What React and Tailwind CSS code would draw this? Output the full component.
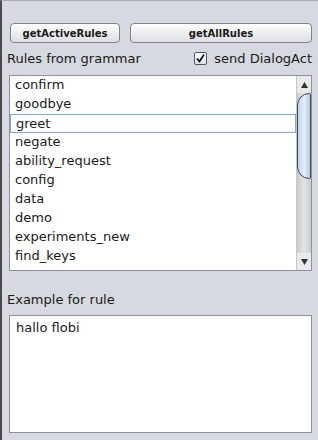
const rules = [
  "confirm",
  "goodbye",
  "greet",
  "negate",
  "ability_request",
  "config",
  "data",
  "demo",
  "experiments_new",
  "find_keys",
];

function Arrow({ up }) {
  return (
    <svg width="7" height="6" viewBox="0 0 7 6">
      <path d={up ? "M3.5 0 L7 6 L0 6 Z" : "M0 0 L7 0 L3.5 6 Z"} fill="#333" />
    </svg>
  );
}

export default function App() {
  return (
    <div
      className="w-[318px] h-[440px] bg-[#d6d9df] border-l-2 border-l-[#4a4a4a] border-t border-t-[#a9acb2] text-[13px] text-[#1a1a1a]"
      style={{ fontFamily: "'DejaVu Sans', sans-serif" }}
    >
      <div className="flex gap-[10px] pl-[8px] pr-[6px] pt-[22px]">
        <button className="w-[110px] h-[20px] rounded-[4px] border border-[#7f8288] bg-gradient-to-b from-white to-[#dcdee2] text-[10px] font-bold">
          getActiveRules
        </button>
        <button className="flex-1 h-[20px] rounded-[4px] border border-[#7f8288] bg-gradient-to-b from-white to-[#dcdee2] text-[10px] font-bold">
          getAllRules
        </button>
      </div>

      <div className="flex items-center justify-between pl-[5px] pr-[6px] mt-[7px] h-[17px]">
        <span>Rules from grammar</span>
        <label className="flex items-center gap-[7px]">
          <span className="w-[13px] h-[13px] border border-[#4e5a6e] rounded-[2px] bg-gradient-to-b from-white to-[#dfe3ea] flex items-center justify-center">
            <svg width="11" height="11" viewBox="0 0 11 11">
              <path d="M2 5.5 L4.5 8.5 L9 1.5" stroke="#111" strokeWidth="1.8" fill="none" />
            </svg>
          </span>
          <span>send DialogAct</span>
        </label>
      </div>

      <div className="ml-[7px] mr-[6px] mt-[8px] h-[196px] border border-[#8f929a] bg-white flex">
        <div className="flex-1">
          {rules.map((r) => (
            <div
              key={r}
              className={
                "h-[19px] leading-[18px] pl-[5px] " +
                (r === "greet" ? "border border-[#7fa9dc] leading-[16px] pl-[4px]" : "")
              }
            >
              {r}
            </div>
          ))}
        </div>
        <div className="w-[15px] border-l border-[#c4c7cc] bg-gradient-to-r from-[#c9cbcf] via-[#e4e5e8] to-[#c9cbcf] flex flex-col">
          <div className="h-[17px] flex items-center justify-center bg-[#e9eaed]">
            <Arrow up />
          </div>
          <div className="h-[86px] rounded-l-[14px] rounded-r-[2px] border border-[#445] bg-gradient-to-r from-[#bcd5ea] via-[#e4eef7] to-[#b2cbe2]" />
          <div className="flex-1" />
          <div className="h-[17px] flex items-center justify-center bg-[#e9eaed]">
            <Arrow />
          </div>
        </div>
      </div>

      <div className="pl-[5px] mt-[19px] h-[17px]">Example for rule</div>

      <div className="ml-[7px] mr-[6px] mt-[8px] h-[118px] border border-[#8f929a] bg-white px-[6px] pt-[2px]">
        hallo flobi
      </div>
    </div>
  );
}
